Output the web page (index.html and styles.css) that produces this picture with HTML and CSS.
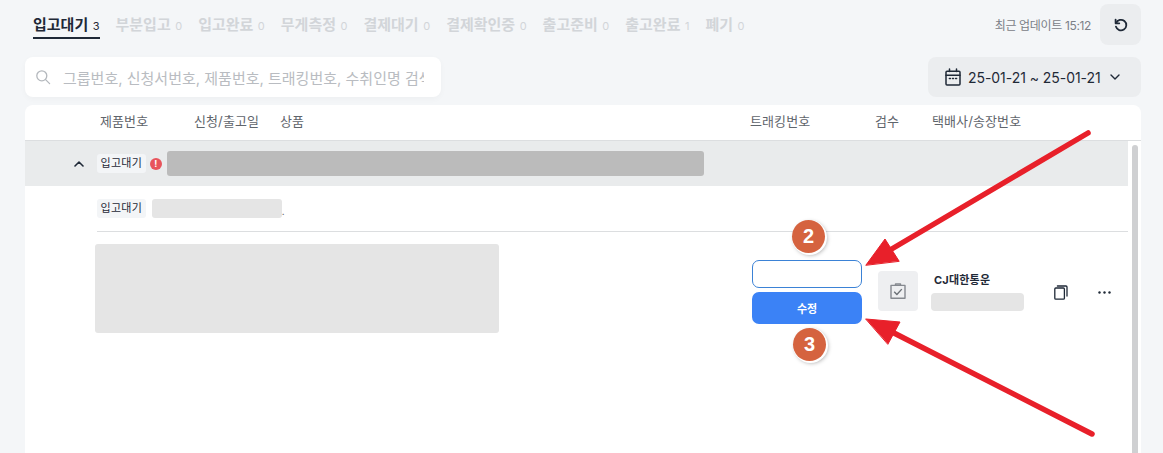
FILE: index.html
```html
<!DOCTYPE html>
<html lang="ko">
<head>
<meta charset="utf-8">
<title>입고대기</title>
<link rel="stylesheet" href="styles.css">
</head>
<body>
<header class="top">
  <nav class="tabs">
    <a class="tab active">입고대기<span class="n">3</span></a>
    <a class="tab">부분입고<span class="n">0</span></a>
    <a class="tab">입고완료<span class="n">0</span></a>
    <a class="tab">무게측정<span class="n">0</span></a>
    <a class="tab">결제대기<span class="n">0</span></a>
    <a class="tab">결제확인중<span class="n">0</span></a>
    <a class="tab">출고준비<span class="n">0</span></a>
    <a class="tab">출고완료<span class="n">1</span></a>
    <a class="tab">폐기<span class="n">0</span></a>
  </nav>
  <div class="update">
    <span class="update-text">최근 업데이트 15:12</span>
    <button class="refresh" aria-label="새로고침">
      <svg width="16" height="16" viewBox="0 0 16 16" fill="none" stroke="#1f2937" stroke-width="1.8" stroke-linecap="round" stroke-linejoin="round"><path d="M3.1 6.1A5.3 5.3 0 1 1 2.9 9.6"/><path d="M2.6 2.6v3.7h3.7"/></svg>
    </button>
  </div>
</header>
<section class="filters">
  <div class="search">
    <svg width="16" height="16" viewBox="0 0 16 16" fill="none" stroke="#b4b8bd" stroke-width="1.3" stroke-linecap="round"><circle cx="6.8" cy="6.8" r="5"/><path d="M10.6 10.6l4 4"/></svg>
    <span class="placeholder">그룹번호, 신청서번호, 제품번호, 트래킹번호, 수취인명 검색</span>
  </div>
  <button class="date">
    <svg width="16" height="18" viewBox="0 0 16 18" fill="none" stroke="#1f2937" stroke-width="1.5" stroke-linecap="round"><rect x="1" y="3.2" width="14" height="13.8" rx="1"/><path d="M1 7.2h14M4.5 1v2.6M11.5 1v2.6"/><path d="M4.4 10.6h1M7.5 10.6h1M10.6 10.6h1"/></svg>
    <span>25-01-21 ~ 25-01-21</span>
    <svg class="caret" width="10" height="6" viewBox="0 0 10 6" fill="none" stroke="#1f2937" stroke-width="1.4" stroke-linecap="round" stroke-linejoin="round"><path d="M1 1l4 4 4-4"/></svg>
  </button>
</section>
<main class="card">
  <div class="thead">
    <span>제품번호</span><span>신청/출고일</span><span>상품</span><span>트래킹번호</span><span>검수</span><span>택배사/송장번호</span>
  </div>
  <div class="tbody">
    <div class="content">
      <div class="group">
        <svg class="chev" width="10" height="6" viewBox="0 0 10 6" fill="none" stroke="#1f2937" stroke-width="1.6" stroke-linecap="round" stroke-linejoin="round"><path d="M1 5l4-4 4 4"/></svg>
        <span class="badge">입고대기</span>
        <span class="alert">!</span>
        <span class="mask mask-dark"></span>
      </div>
      <div class="sub">
        <span class="badge">입고대기</span>
        <span class="mask mask-sub"></span><span class="dot">.</span>
      </div>
      <div class="item">
        <div class="mask thumb"></div>
        <div class="tracking">
          <div class="field"></div>
          <button class="save">수정</button>
        </div>
        <div class="check">
          <svg width="16" height="16" viewBox="0 0 16 16" fill="none" stroke="#85898f" stroke-width="1.4" stroke-linejoin="round"><rect x="1" y="2.4" width="14" height="12.8"/><path d="M5.5 2.4V1h5v1.4"/><path d="M4.2 8.8l2.7 2.7 4.9-5.4" stroke="#6b7076"/></svg>
        </div>
        <div class="carrier">
          <span class="carrier-name">CJ대한통운</span>
          <span class="mask mask-invoice"></span>
        </div>
        <svg class="copy" width="14" height="15" viewBox="0 0 14 15" fill="none" stroke="#1f2937" stroke-width="1.3" stroke-linejoin="round" stroke-linecap="round"><rect x="0.8" y="3" width="9.6" height="11.2" rx="1"/><path d="M3.4 1h8.6a1 1 0 0 1 1 1v9"/></svg>
        <svg class="more" width="13" height="3" viewBox="0 0 13 3" fill="#1f2937"><circle cx="1.5" cy="1.5" r="1.2"/><circle cx="6.5" cy="1.5" r="1.2"/><circle cx="11.5" cy="1.5" r="1.2"/></svg>
      </div>
    </div>
    <div class="scrollbar"></div>
  </div>
</main>
<svg class="arrows" width="1163" height="453" viewBox="0 0 1163 453" fill="#e8202a" stroke="#e8202a" stroke-linecap="round">
  <path d="M1088 133L890 250" stroke-width="5.5" fill="none"/>
  <path d="M866 265L885 239 899 261Z" stroke-width="1" stroke-linejoin="round"/>
  <path d="M1092 434L892 332" stroke-width="5.5" fill="none"/>
  <path d="M866 319L900 322 888 344Z" stroke-width="1" stroke-linejoin="round"/>
</svg>
<span class="step step-2">2</span>
<span class="step step-3">3</span>
</body>
</html>
```
FILE: styles.css
```css
* { box-sizing: border-box; }
html, body { margin: 0; height: 100%; }
body {
  position: relative;
  height: 453px;
  overflow: hidden;
  background: #f4f6f8;
  color: #1f2937;
  font-family: Inter, "Noto Sans CJK KR", sans-serif;
  display: flex;
  flex-direction: column;
}
button { font-family: inherit; border: 0; padding: 0; }

.top {
  height: 57px;
  padding: 4px 22px 0 33px;
  display: flex;
  justify-content: space-between;
  align-items: flex-start;
  flex: none;
}
.tabs { display: flex; gap: 16px; padding-top: 9px; }
.tab {
  height: 26px;
  padding-top: 2px;
  font-size: 15px;
  font-weight: 700;
  line-height: 20px;
  color: #d2d5d9;
  white-space: nowrap;
}
.tab.active { color: #1f2937; border-bottom: 2px solid #1f2937; }
.n { font-size: 11px; font-weight: 400; margin-left: 4.5px; }

.update { display: flex; align-items: center; gap: 9px; }
.update-text { font-size: 12px; color: #7b8087; letter-spacing: -0.35px; }
.refresh {
  width: 41px; height: 41px;
  background: #ebedef;
  border-radius: 8px;
  display: flex; align-items: center; justify-content: center;
}

.filters {
  height: 40px;
  padding: 0 22px 0 25px;
  display: flex;
  justify-content: space-between;
  flex: none;
}
.search {
  width: 416px;
  background: #fff;
  border-radius: 8px;
  box-shadow: 0 2px 6px rgba(0,0,0,.03);
  padding: 0 17px 0 10px;
  display: flex;
  align-items: center;
  gap: 12px;
  overflow: hidden;
}
.search svg { flex: none; }
.placeholder {
  min-width: 0;
  font-size: 15px;
  color: #b9bcc1;
  white-space: nowrap;
  overflow: hidden;
}
.date {
  width: 213px;
  background: #ebedef;
  border-radius: 8px;
  display: flex;
  align-items: center;
  padding-left: 17px;
  gap: 7px;
  font-size: 14px;
  letter-spacing: -0.05px;
  color: #1f2937;
}
.caret { margin-left: 2px; }

.card {
  margin: 8px 22px 0 25px;
  flex: 1;
  background: #fff;
  border-radius: 8px 8px 0 0;
  display: flex;
  flex-direction: column;
  min-height: 0;
}
.thead {
  height: 36px;
  flex: none;
  border-bottom: 1px solid #dcdee0;
  display: grid;
  grid-template-columns: 94px 86px 470px 125px 57px 1fr;
  align-items: center;
  padding: 0 0 5px 75px;
  font-size: 13px;
  letter-spacing: 0.1px;
  color: #5f656c;
}
.tbody { flex: 1; display: flex; min-height: 0; }
.content { width: 1103px; flex: none; }
.scrollbar {
  width: 6px;
  margin: 4px 0 0 4px;
  background: #cfd0d2;
  border-radius: 3px 3px 0 0;
}

.group {
  height: 45px;
  background: #e9ebec;
  display: flex;
  align-items: center;
  padding-left: 49px;
}
.chev { margin-right: 13px; }
.badge {
  height: 19px;
  padding: 0 3.5px;
  background: #f3f5f7;
  border-radius: 3px;
  font-size: 11px;
  line-height: 19px;
  letter-spacing: 0.3px;
  color: #1f2937;
  white-space: nowrap;
}
.alert {
  width: 12px; height: 12px;
  margin: 0 5px 0 4px;
  border-radius: 50%;
  background: #e8545c;
  color: #fff;
  font-size: 9px;
  font-weight: 700;
  line-height: 12px;
  text-align: center;
}
.mask { display: block; background: #e5e5e5; border-radius: 3px; }
.mask-dark { width: 537px; height: 25px; background: #bbb; }

.sub {
  height: 46px;
  border-bottom: 1px solid #dcdee0;
  margin-left: 72px;
  display: flex;
  align-items: center;
  padding-bottom: 1px;
}
.mask-sub { width: 130px; height: 19px; margin-left: 6px; }
.dot { font-size: 10px; color: #555; align-self: flex-end; margin-bottom: 13px; }

.item {
  padding: 12px 0 0 70px;
  display: flex;
  align-items: flex-start;
}
.thumb { width: 404px; height: 89px; flex: none; }
.tracking {
  width: 110px;
  margin: 16px 0 0 253px;
  display: flex;
  flex-direction: column;
  gap: 4px;
}
.field {
  height: 28px;
  background: #fff;
  border: 1px solid #3b82d6;
  border-radius: 7px;
}
.save {
  height: 32px;
  background: #3b82f6;
  border-radius: 7px;
  color: #fff;
  font-size: 11px;
  font-weight: 700;
}
.check {
  width: 40px; height: 40px;
  margin: 27px 0 0 16px;
  background: #eeeff1;
  border-radius: 4px;
  display: flex; align-items: center; justify-content: center;
}
.carrier {
  width: 93px;
  margin: 28px 0 0 13px;
  display: flex;
  flex-direction: column;
  gap: 5px;
}
.carrier-name {
  font-size: 11px;
  font-weight: 700;
  line-height: 16px;
  letter-spacing: 0.2px;
  padding-left: 3px;
  white-space: nowrap;
}
.mask-invoice { height: 18px; border-radius: 4px; }
.copy { margin: 41px 0 0 30px; flex: none; }
.more { margin: 47px 0 0 30px; flex: none; }

.arrows { position: absolute; left: 0; top: 0; pointer-events: none; }
.step {
  position: absolute;
  width: 33px; height: 33px;
  border-radius: 50%;
  background: #d5633f;
  box-shadow: 1px 1px 0 1px #fff, 2px 2px 4px rgba(0,0,0,.35);
  color: #fff;
  font-family: "Liberation Sans", sans-serif;
  font-size: 20px;
  font-weight: 700;
  line-height: 33px;
  text-align: center;
}
.step-2 { left: 792px; top: 220px; }
.step-3 { left: 793px; top: 328px; }
```
